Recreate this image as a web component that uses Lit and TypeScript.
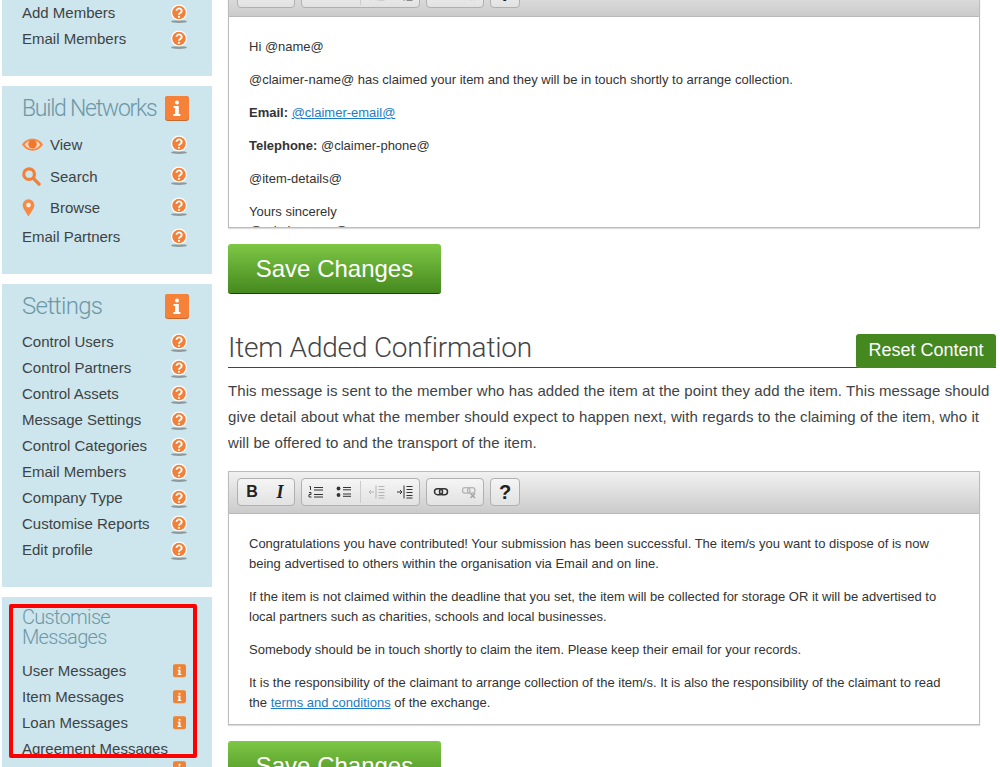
import { LitElement, html, css, svg } from "lit";
import { customElement } from "lit/decorators.js";

const question = html`<svg class="q" viewBox="0 0 18 20" width="18" height="20">
  <ellipse cx="9" cy="17.600" rx="8" ry="1.400" fill="#8d9a9d" />
  <circle cx="9" cy="8.500" r="8" fill="#fff" />
  <circle cx="9" cy="8.500" r="6.800" fill="#f2803a" />
  <path d="M6.500 6.800a2.600 2.400 0 1 1 3.900 2.100c-.9.500-1.400 1-1.400 1.800" fill="none" stroke="#fff" stroke-width="1.900" />
  <circle cx="9" cy="12.800" r="1.100" fill="#fff" />
</svg>`;

const infoGlyph = svg`<circle cx="12" cy="6.600" r="2" fill="#fff" />
  <path d="M8.600 10h5.200v8h1.600v2H8.400v-2h1.700v-6H8.600z" fill="#fff" />`;

const infoBig = html`<svg class="ib" viewBox="0 0 24 25" width="24" height="25">
  <rect x="0" y="0" width="24" height="25" rx="3" fill="#c9682c" />
  <rect x="0" y="0" width="24" height="24" rx="3" fill="#f58238" />
  ${infoGlyph}
</svg>`;

const infoSmall = html`<svg class="is" viewBox="0 0 24 25" width="13" height="14">
  <rect x="0" y="0" width="24" height="25" rx="4" fill="#d8c4b0" />
  <rect x="0" y="0" width="24" height="23.500" rx="4" fill="#ee8235" />
  ${infoGlyph}
</svg>`;

const eye = html`<svg viewBox="0 0 22 14" width="21" height="14">
  <path d="M0 6.500C3 2 7 .5 11 .5S19 2 22 6.500c-3 4.700-7 6.500-11 6.500S3 11.200 0 6.500z" fill="#f58a45" />
  <path d="M2.800 6.400C5 3.600 7.500 2.500 11 2.500s6 1.100 8.200 3.900C17 9.600 14.500 11 11 11S5 9.600 2.800 6.400z" fill="#fbd9c0" />
  <circle cx="11" cy="6.200" r="4.400" fill="#f2762b" />
</svg>`;

const search = html`<svg viewBox="0 0 20 20" width="19" height="19">
  <circle cx="7.500" cy="7.500" r="5.600" fill="none" stroke="#f2803a" stroke-width="3.400" />
  <path d="M12 12l6 6" stroke="#f2803a" stroke-width="3.600" stroke-linecap="round" />
</svg>`;

const pin = html`<svg viewBox="0 0 14 20" width="13" height="18">
  <path d="M7 19.500C4.500 15 .5 11 .5 6.800a6.500 6.500 0 0 1 13 0C13.500 11 9.500 15 7 19.500z" fill="#f58a45" />
  <circle cx="7" cy="6.800" r="2.600" fill="#fdeee2" />
</svg>`;

const ico = (d: any) => html`<svg viewBox="0 0 20 14" width="20" height="14">${d}</svg>`;
const ol = ico(svg`<path d="M3.500 1.500h1v3.500M3 7.500h2v2h-2v2.500h2.500M8 2.500h9M8 5h9M8 9.500h9M8 12h9" fill="none" stroke="#333" stroke-width="1" />`);
const ul = ico(svg`<circle cx="4.500" cy="3.500" r="1.900" fill="#333" /><circle cx="4.500" cy="10" r="1.900" fill="#333" /><path d="M9 2.500h8M9 4.800h8M9 9h8M9 11.300h8" stroke="#333" stroke-width="1" />`);
const outdent = ico(svg`<path d="M9 .5v13M2 7h5M4 5L2 7l2 2M11.500 1.500h6M11.500 4.500h6M11.500 7.500h6M11.500 10.500h6M11.500 13h6" fill="none" stroke="#b5b5b5" stroke-width="1" />`);
const indent = ico(svg`<path d="M9 .5v13M2 7h5M5 5l2 2-2 2M11.500 1.500h6M11.500 4.500h6M11.500 7.500h6M11.500 10.500h6M11.500 13h6" fill="none" stroke="#333" stroke-width="1" />`);
const link = ico(svg`<rect x="3.500" y="3.700" width="8" height="6" rx="3" fill="none" stroke="#333" stroke-width="1.500" /><rect x="8.500" y="3.700" width="8" height="6" rx="3" fill="none" stroke="#333" stroke-width="1.500" />`);
const unlink = ico(svg`<rect x="3.500" y="2.700" width="7.500" height="5.500" rx="2.700" fill="none" stroke="#b5b5b5" stroke-width="1.300" /><rect x="8.500" y="2.700" width="7.500" height="5.500" rx="2.700" fill="none" stroke="#b5b5b5" stroke-width="1.300" /><path d="M11.500 8.500l4.500 4.500M16 8.500l-4.500 4.500" stroke="#a5a5a5" stroke-width="1.500" />`);

const toolbar = html`<div class="toolbar">
  <div class="group"><span class="tb bold">B</span><span class="tb ital">I</span></div>
  <div class="group"><span class="tb">${ol}</span><span class="tb">${ul}</span><span class="sep"></span><span class="tb">${outdent}</span><span class="tb">${indent}</span></div>
  <div class="group"><span class="tb">${link}</span><span class="tb">${unlink}</span></div>
  <div class="group"><span class="tb bold help">?</span></div>
</div>`;

const row = (label: string, icon: any = question, lead?: any) => html`<div class="row ${lead ? "lead" : ""}">
  ${lead ? html`<span class="lead-ico">${lead}</span>` : ""}<span class="label">${label}</span>${icon}
</div>`;

@customElement("app-root")
export class AppRoot extends LitElement {
  static styles = css`
    :host { display: block; width: 1000px; height: 767px; overflow: hidden; position: relative; background: #fff;
      font-family: "Liberation Sans", Arial, sans-serif; color: #3d4345; }
    .page { display: flex; align-items: flex-start; gap: 16px; padding-left: 2px; width: 996px; }
    .side { width: 210px; flex: none; display: flex; flex-direction: column; gap: 10px; margin-top: -39px; }
    .panel { background: #cde5ec; padding-bottom: 24px; }
    .panel.first { padding-top: 39px; }
    .head { height: 44px; padding: 0 23px 0 20px; display: flex; align-items: center; justify-content: space-between; box-sizing: border-box; }
    h3 { margin: 0; font-family: Roboto, sans-serif; font-weight: 300; font-size: 24px; color: #6c98a8; letter-spacing: -.75px; white-space: nowrap; }
    h3.tight { font-size: 23px; letter-spacing: -1.25px; }
    .ib { display: block; }
    .panel.msgs { padding-top: 10px; }
    .panel.msgs h3 { font-size: 20px; line-height: 20px; padding: 0 20px 11px; letter-spacing: -.7px; }
    .rows.settings { margin-top: 1px; }
    .rows.net { margin-top: -1px; }
    .rows.net .row:first-child { height: 32px; }
    .rows.net .row:last-child { margin-top: 1px; }
    .row { display: flex; flex-wrap: wrap; align-items: center; justify-content: space-between; min-height: 26px; padding: 0 24px 0 20px; font-size: 15px; line-height: 26px; color: #3d4345; }
    .row.lead { height: 31px; }
    .lead-ico { width: 28px; display: flex; align-items: center; }
    .row.lead .label { flex: 1; }
    .q { display: block; margin-top: 2px; }
    .row.lead .q { margin-top: -1px; }
    .msgs .row { padding-right: 26px; }
    .is { display: block; }
    .row.broken .label { flex: 0 0 100%; }
    .row.broken .is { margin-left: auto; margin-top: -1px; }
    .main { width: 768px; flex: none; margin-top: -27px; }
    .editor { width: 752px; box-sizing: border-box; border: 1px solid #bcbcbc; box-shadow: 0 1px 1px #ddd; overflow: hidden; background: #fff; }
    .editor.a { height: 255px; }
    .editor.b { height: 254px; }
    .toolbar { height: 43px; box-sizing: border-box; border-bottom: 1px solid #b9b9b9; background: linear-gradient(#f1f1f1, #cbcbcb); display: flex; gap: 6px; padding: 6px 8px 0; }
    .editor.b .toolbar { height: 42px; }
    .group { display: flex; align-items: center; height: 28px; box-sizing: border-box; border: 1px solid #b0b0b0; border-radius: 4px; background: linear-gradient(#f5f5f5, #e2e2e2); }
    .tb { width: 28px; height: 26px; display: flex; align-items: center; justify-content: center; color: #222; font-size: 16px; }
    .bold { font-weight: bold; }
    .help { font-size: 20px; }
    .ital { font-family: "Liberation Serif", serif; font-style: italic; font-weight: bold; font-size: 18px; }
    .sep { width: 1px; margin: 0 2px; height: 22px; background: #ccc; }
    .body { padding: 20px 35px 0 20px; font-size: 13px; line-height: 20px; color: #333; }
    .body p { margin: 0 0 13px; }
    .body p.close { line-height: 19px; }
    a { color: #1b7cc4; text-decoration: underline; }
    .save { margin: 16px 0 0; width: 213px; height: 50px; box-sizing: border-box; border-bottom: 1px solid #1d3f10; border-radius: 3px; background: linear-gradient(#7dc745, #45891f); color: #fff; font-size: 24px; line-height: 50px; text-align: center; }
    .title-row { display: flex; justify-content: space-between; align-items: flex-end; margin-top: 39px; border-bottom: 1px solid #444; height: 35px; box-sizing: border-box; }
    h2 { margin: 0; font-family: Roboto, sans-serif; font-weight: 300; font-size: 28px; line-height: 30px; color: #444; letter-spacing: -.2px; padding-bottom: 4px; }
    .reset { width: 140px; height: 34px; margin-bottom: -1px; box-sizing: border-box; background: #45881f; color: #fff; border-radius: 3px; font-size: 18px; line-height: 32px; text-align: center; }
    .intro { margin: 10px 0 15px; font-size: 15px; letter-spacing: .08px; line-height: 26px; color: #3d4345; }
    .mark { position: absolute; left: 9px; top: 604px; width: 188px; height: 154px; box-sizing: border-box; border: 4px solid #fe0000; border-radius: 2px; }
  `;

  render() {
    return html`<div class="page">
        <aside class="side">
          <section class="panel first">${row("Add Members")}${row("Email Members")}</section>
          <section class="panel">
            <div class="head"><h3 class="tight">Build Networks</h3>${infoBig}</div>
            <div class="rows net">${row("View", question, eye)}${row("Search", question, search)}${row("Browse", question, pin)}${row("Email Partners")}</div>
          </section>
          <section class="panel">
            <div class="head"><h3>Settings</h3>${infoBig}</div>
            <div class="rows settings">
              ${["Control Users", "Control Partners", "Control Assets", "Message Settings", "Control Categories", "Email Members", "Company Type", "Customise Reports", "Edit profile"].map((l) => row(l))}
            </div>
          </section>
          <section class="panel msgs">
            <h3>Customise<br />Messages</h3>
            ${row("User Messages", infoSmall)}${row("Item Messages", infoSmall)}${row("Loan Messages", infoSmall)}
            <div class="row broken"><span class="label">Agreement Messages</span>${infoSmall}</div>
          </section>
        </aside>
        <main class="main">
          <div class="editor a">
            ${toolbar}
            <div class="body">
              <p>Hi @name@</p>
              <p>@claimer-name@ has claimed your item and they will be in touch shortly to arrange collection.</p>
              <p><b>Email:</b> <a>@claimer-email@</a></p>
              <p><b>Telephone:</b> @claimer-phone@</p>
              <p>@item-details@</p>
              <p class="close">Yours sincerely<br />@admin-name@</p>
            </div>
          </div>
          <div class="save">Save Changes</div>
          <div class="title-row"><h2>Item Added Confirmation</h2><div class="reset">Reset Content</div></div>
          <p class="intro">This message is sent to the member who has added the item at the point they add the item. This message should give detail about what the member should expect to happen next, with regards to the claiming of the item, who it will be offered to and the transport of the item.</p>
          <div class="editor b">
            ${toolbar}
            <div class="body">
              <p>Congratulations you have contributed! Your submission has been successful. The item/s you want to dispose of is now being advertised to others within the organisation via Email and on line.</p>
              <p>If the item is not claimed within the deadline that you set, the item will be collected for storage OR it will be advertised to local partners such as charities, schools and local businesses.</p>
              <p>Somebody should be in touch shortly to claim the item. Please keep their email for your records.</p>
              <p>It is the responsibility of the claimant to arrange collection of the item/s. It is also the responsibility of the claimant to read the <a>terms and conditions</a> of the exchange.</p>
            </div>
          </div>
          <div class="save">Save Changes</div>
        </main>
      </div>
      <div class="mark"></div>`;
  }
}
